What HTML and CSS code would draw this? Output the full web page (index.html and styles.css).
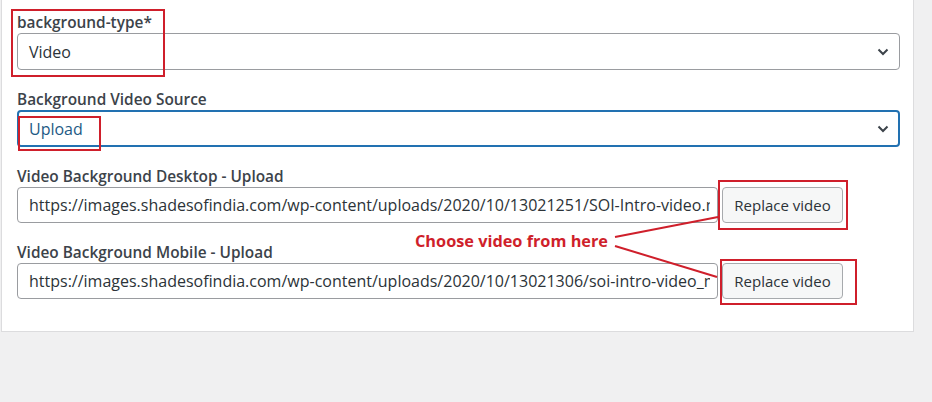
FILE: index.html
```html
<!DOCTYPE html>
<html lang="en">
<head>
<meta charset="utf-8">
<title>Video background settings</title>
<link rel="stylesheet" href="styles.css">
</head>
<body>
<div class="panel">
  <div class="field">
    <label class="label">background-type*</label>
    <div class="select"><span>Video</span><svg class="chev" width="12" height="8" viewBox="0 0 12 8"><path d="M1.5 1.5 L6 6 L10.5 1.5" fill="none" stroke="#3c434a" stroke-width="2"/></svg></div>
  </div>
  <div class="field">
    <label class="label">Background Video Source</label>
    <div class="select focus"><span>Upload</span><svg class="chev" width="12" height="8" viewBox="0 0 12 8"><path d="M1.5 1.5 L6 6 L10.5 1.5" fill="none" stroke="#3c434a" stroke-width="2"/></svg></div>
  </div>
  <div class="field">
    <label class="label">Video Background Desktop - Upload</label>
    <div class="row">
      <div class="input"><span class="value">https://images.shadesofindia.com/wp-content/uploads/2020/10/13021251/SOI-Intro-video.mp4</span></div>
      <button class="btn">Replace video</button>
    </div>
  </div>
  <div class="field">
    <label class="label">Video Background Mobile - Upload</label>
    <div class="row">
      <div class="input"><span class="value">https://images.shadesofindia.com/wp-content/uploads/2020/10/13021306/soi-intro-video_mobile.mp4</span></div>
      <button class="btn">Replace video</button>
    </div>
  </div>
</div>
<div class="annotations">
  <svg class="marks" width="932" height="402" viewBox="0 0 932 402">
    <g fill="none" stroke="#cf1f2b" stroke-width="2">
      <rect x="12" y="10" width="152" height="66"/>
      <rect x="19" y="117" width="81" height="33"/>
      <rect x="719" y="181" width="128" height="48"/>
      <rect x="721" y="260" width="135" height="44"/>
      <line x1="615" y1="237" x2="718" y2="217"/>
      <line x1="615" y1="246" x2="717" y2="277"/>
    </g>
  </svg>
  <div class="note">Choose video from here</div>
</div>
</body>
</html>
```
FILE: styles.css
```css
html, body {
  margin: 0;
  padding: 0;
}
body {
  background: #f0f0f1;
  font-family: "Open Sans", "Noto Sans", sans-serif;
  color: #2c3338;
  position: relative;
  width: 932px;
  height: 402px;
  overflow: hidden;
}
.panel {
  box-sizing: border-box;
  margin-left: 1px;
  width: 913px;
  height: 332px;
  background: #fff;
  border: 1px solid #dcdcde;
  border-top: none;
  padding: 13px 13px 0 15px;
  display: flex;
  flex-direction: column;
}
.field {
  display: flex;
  flex-direction: column;
}
.field + .field {
  margin-top: 20px;
}
.label {
  display: block;
  font-size: 15.4px;
  font-weight: 600;
  line-height: 20px;
  color: #3c434a;
}
.select {
  box-sizing: border-box;
  height: 37px;
  border: 1px solid #9a9ca0;
  border-radius: 4px;
  display: flex;
  align-items: center;
  justify-content: space-between;
  padding: 0 10px 0 11px;
  font-size: 16px;
  color: #2c3338;
}
.select.focus {
  border: 2px solid #2271b1;
  padding-left: 10px;
  padding-right: 9px;
  color: #1e5a85;
}
.chev {
  display: block;
}
.row {
  display: flex;
  gap: 4px;
}
.input {
  box-sizing: border-box;
  width: 701px;
  height: 36px;
  border: 1px solid #9a9ca0;
  border-radius: 4px;
  padding: 0 7px 0 11px;
  font-size: 16px;
  line-height: 34px;
  color: #2c3338;
}
.value {
  display: block;
  white-space: nowrap;
  overflow: hidden;
}
.btn {
  box-sizing: border-box;
  width: 121px;
  height: 36px;
  border: 1px solid #a7aaad;
  border-radius: 4px;
  background: #f6f7f7;
  font-family: inherit;
  font-size: 15px;
  color: #2c3338;
  padding: 0;
}
.annotations {
  position: absolute;
  left: 0;
  top: 0;
  width: 932px;
  height: 402px;
  pointer-events: none;
}
.marks {
  position: absolute;
  left: 0;
  top: 0;
}
.note {
  position: absolute;
  left: 415px;
  top: 231px;
  font-size: 16.3px;
  font-weight: 700;
  line-height: 20px;
  color: #cf1f2b;
  white-space: nowrap;
}
```
